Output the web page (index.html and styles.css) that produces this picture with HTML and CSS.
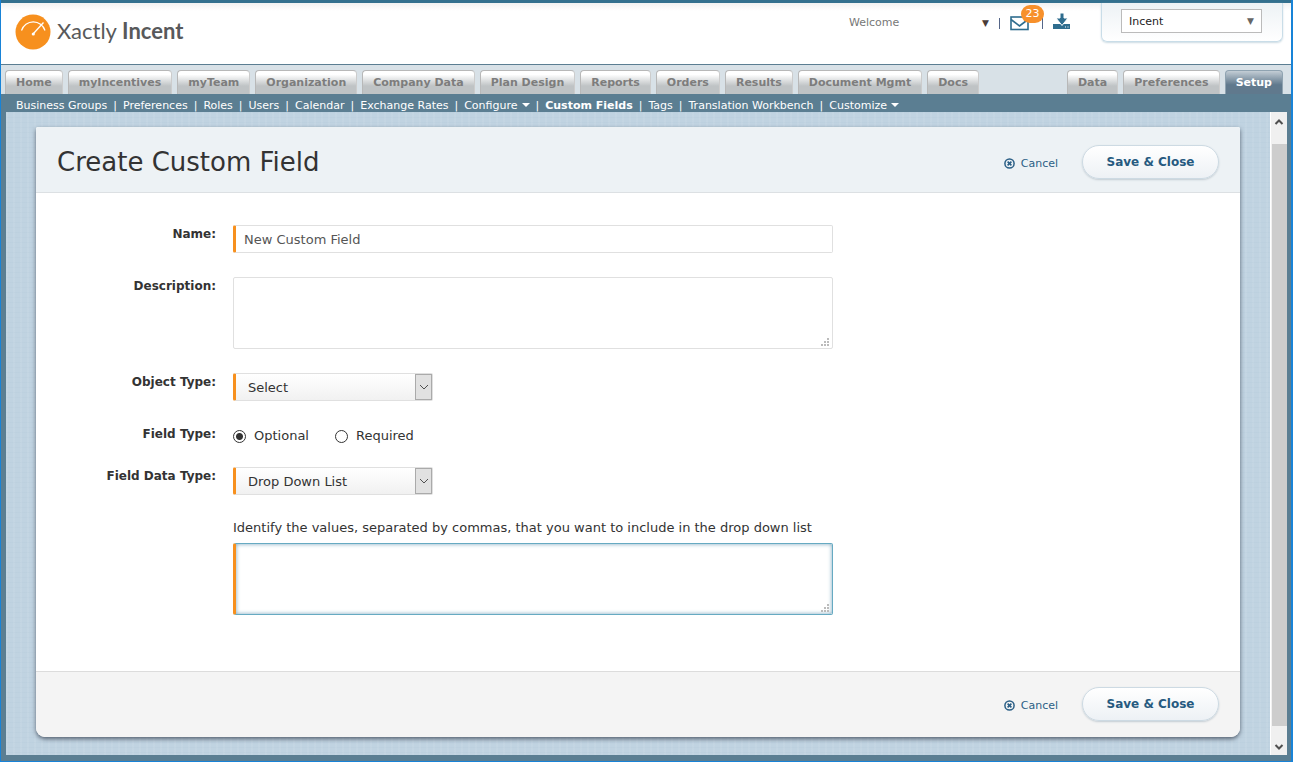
FILE: index.html
```
<!DOCTYPE html>
<html lang="en">
<head>
    <meta charset="UTF-8">
    <meta name="viewport" content="width=device-width, initial-scale=1.0">
    <title>Create Custom Field</title>
    <link rel="stylesheet" href="styles.css">
</head>
<body>
    <header class="header">
        <a class="logo" href="#">
            <svg width="36" height="36" viewBox="0 0 36 36">
                <circle cx="18" cy="18" r="17.5" fill="#f7901e"/>
                <path d="M6.5 16.5A12.3 12.3 0 0 1 30 16.5" fill="none" stroke="#fff" stroke-width="1.2"/>
                <path d="M18.5 19.5L28.5 8.500" stroke="#fff" stroke-width="1.3"/>
                <circle cx="18.3" cy="20" r="1.600" fill="#fff"/>
            </svg>
            <span>Xactly <b>Incent</b></span>
        </a>
        <div class="tools">
            <button class="welcome" type="button">Welcome <span class="caret">▼</span></button>
            <span class="bar"></span>
            <a class="mail" href="#" aria-label="Messages">
                <svg width="20" height="16" viewBox="0 0 20 16" fill="none" stroke="#2f6d8e" stroke-width="1.6">
                    <rect x="1" y="2" width="17" height="12.5"/>
                    <path d="M1 4.5l8.500 6.500 8.500-6.500"/>
                </svg>
                <span class="badge">23</span>
            </a>
            <span class="bar"></span>
            <a class="download" href="#" aria-label="Downloads">
                <svg width="18" height="17" viewBox="0 0 18 17" fill="#2f6d8e">
                    <path d="M0 11h17v5H0z"/>
                    <path d="M7 0h4v5h4l-6 7.500-6-7.500h4z" stroke="#fff" stroke-width="1"/>
                    <path d="M12 13.500h1v1h-1zM14.500 13.500h1v1h-1z" fill="#fff"/>
                </svg>
            </a>
            <div class="product">
                <select aria-label="Product">
                    <option>Incent</option>
                </select>
                <span class="caret">▼</span>
            </div>
        </div>
    </header>

    <nav class="tabs">
        <a href="#">Home</a>
        <a href="#">myIncentives</a>
        <a href="#">myTeam</a>
        <a href="#">Organization</a>
        <a href="#">Company Data</a>
        <a href="#">Plan Design</a>
        <a href="#">Reports</a>
        <a href="#">Orders</a>
        <a href="#">Results</a>
        <a href="#">Document Mgmt</a>
        <a href="#">Docs</a>
        <a class="first-right" href="#">Data</a>
        <a href="#">Preferences</a>
        <a class="active" href="#">Setup</a>
    </nav>

    <nav class="subnav">
        <a href="#">Business Groups</a>
        <a href="#">Preferences</a>
        <a href="#">Roles</a>
        <a href="#">Users</a>
        <a href="#">Calendar</a>
        <a href="#">Exchange Rates</a>
        <a class="menu" href="#">Configure</a>
        <a class="active" href="#">Custom Fields</a>
        <a href="#">Tags</a>
        <a href="#">Translation Workbench</a>
        <a class="menu" href="#">Customize</a>
    </nav>

    <div class="frame">
        <main class="content">
            <form class="panel">
                <div class="panel-header">
                    <h1>Create Custom Field</h1>
                    <a class="cancel" href="#">
                        <svg width="11" height="11" viewBox="0 0 11 11" fill="none" stroke="#2b5f86">
                            <circle cx="5.500" cy="5.500" r="4.600" stroke-width="1.500"/>
                            <path d="M3.600 3.600l3.800 3.800M7.400 3.600L3.600 7.400" stroke-width="1.600"/>
                        </svg>
                        Cancel
                    </a>
                    <button class="save" type="submit">Save &amp; Close</button>
                </div>

                <div class="fields">
                    <label class="label" for="name">Name:</label>
                    <input class="box required" type="text" id="name" value="New Custom Field">

                    <label class="label" for="description">Description:</label>
                    <div class="area">
                        <textarea class="box" id="description"></textarea>
                        <svg class="grip" width="9" height="9" viewBox="0 0 9 9"><path d="M6 0h2v2H6zM3 3h2v2H3zM6 3h2v2H6zM0 6h2v2H0zM3 6h2v2H3zM6 6h2v2H6z"/></svg>
                    </div>

                    <label class="label" for="object-type">Object Type:</label>
                    <div class="select">
                        <select class="box required" id="object-type">
                            <option>Select</option>
                        </select>
                        <span class="arrow"><svg width="10" height="6" viewBox="0 0 10 6"><path d="M1 1l4 4 4-4"/></svg></span>
                    </div>

                    <span class="label" id="field-type">Field Type:</span>
                    <div class="radios" role="radiogroup" aria-labelledby="field-type">
                        <label><input type="radio" name="fieldType" checked>Optional</label>
                        <label><input type="radio" name="fieldType">Required</label>
                    </div>

                    <label class="label" for="data-type">Field Data Type:</label>
                    <div class="select">
                        <select class="box required" id="data-type">
                            <option>Drop Down List</option>
                        </select>
                        <span class="arrow"><svg width="10" height="6" viewBox="0 0 10 6"><path d="M1 1l4 4 4-4"/></svg></span>
                    </div>

                    <div class="values">
                        <label for="values">Identify the values, separated by commas, that you want to include in the drop down list</label>
                        <div class="area">
                            <textarea class="box required focused" id="values"></textarea>
                            <svg class="grip" width="9" height="9" viewBox="0 0 9 9"><path d="M6 0h2v2H6zM3 3h2v2H3zM6 3h2v2H6zM0 6h2v2H0zM3 6h2v2H3zM6 6h2v2H6z"/></svg>
                        </div>
                    </div>
                </div>

                <div class="panel-footer">
                    <a class="cancel" href="#">
                        <svg width="11" height="11" viewBox="0 0 11 11" fill="none" stroke="#2b5f86">
                            <circle cx="5.500" cy="5.500" r="4.600" stroke-width="1.500"/>
                            <path d="M3.600 3.600l3.800 3.800M7.400 3.600L3.600 7.400" stroke-width="1.600"/>
                        </svg>
                        Cancel
                    </a>
                    <button class="save" type="submit">Save &amp; Close</button>
                </div>
            </form>
        </main>
        <div class="scrollbar">
            <svg width="10" height="8" viewBox="0 0 10 8"><path d="M1.500 6L5 2.500 8.500 6"/></svg>
            <div class="thumb"></div>
            <svg width="10" height="8" viewBox="0 0 10 8"><path d="M1.500 2L5 5.500 8.500 2"/></svg>
        </div>
    </div>
</body>
</html>
```
FILE: styles.css
```
* {
    box-sizing: border-box;
}

body {
    display: flex;
    flex-direction: column;
    min-height: 100vh;
    margin: 0;
    border: 1px solid #1883d7;
    border-top: none;
    border-right-width: 2px;
    background-color: #fff;
    color: #333;
    font-family: Verdana, "DejaVu Sans", sans-serif;
    font-size: 13px;
}

a {
    text-decoration: none;
}

input, textarea, select, button {
    font-family: inherit;
}

/* Header */
.header {
    display: flex;
    justify-content: space-between;
    height: 65px;
    border-top: 3px solid #33708e;
    border-bottom: 1px solid #5b7e92;
    background: linear-gradient(#f1f1f1, #fff 8px);
}

.logo {
    display: flex;
    gap: 6px;
    height: 36px;
    margin: 11px 0 0 14px;
    color: #58595b;
    font-family: Lato, sans-serif;
    font-size: 22px;
    line-height: 34px;
}

.tools {
    display: flex;
    align-items: flex-start;
    padding-right: 8px;
}

.welcome {
    display: flex;
    justify-content: space-between;
    width: 140px;
    margin-top: 12px;
    padding: 0;
    border: none;
    background: none;
    color: #777;
    font-size: 11px;
    line-height: 16px;
}

.caret {
    color: #4a3c38;
    font-size: 9px;
}

.bar {
    width: 1px;
    height: 11px;
    margin: 15px 10px 0;
    background-color: #568;
}

.mail {
    position: relative;
    height: 16px;
    margin-top: 12px;
}

.mail + .bar {
    margin-left: 12px;
}

.badge {
    position: absolute;
    top: -10px;
    left: 11px;
    width: 23px;
    border-radius: 9px;
    background-color: #f7902b;
    color: #fff;
    font-size: 11px;
    line-height: 18px;
    text-align: center;
}

.download {
    margin: 10px 30px 0 0;
}

.product {
    position: relative;
    width: 182px;
    height: 39px;
    padding: 6px 20px 6px 19px;
    border: 1px solid #c9dde8;
    border-top: none;
    border-radius: 0 0 6px 6px;
    background: linear-gradient(#edf2f5, #fff);
    box-shadow: 0 1px 2px #ccdbe3;
}

.product select {
    width: 100%;
    height: 24px;
    padding: 0 7px;
    border: 1px solid #bbb;
    border-radius: 0;
    background-color: #fff;
    color: #222;
    font-size: 11px;
    appearance: none;
}

.product .caret {
    position: absolute;
    top: 13px;
    right: 28px;
    color: #666;
    pointer-events: none;
}

/* Main navigation */
.tabs {
    display: flex;
    gap: 5px;
    padding: 5px 8px 0 4px;
    background-color: #d8e1e7;
}

.tabs a {
    height: 24px;
    padding: 0 10px;
    border: 1px solid #b8b8b8;
    border-right-color: #ccc;
    border-bottom: none;
    border-radius: 4px 4px 0 0;
    background: linear-gradient(#fff 15%, #bfc3c5 65%);
    color: #7d7d7d;
    font-size: 11px;
    font-weight: bold;
    line-height: 24px;
    white-space: nowrap;
}

.tabs .first-right {
    margin-left: auto;
}

.tabs .active {
    border-color: #8fa3b1;
    background: linear-gradient(#c3cdd5, #60798d 60%);
    color: #fff;
}

.subnav {
    display: flex;
    height: 18px;
    padding-left: 15px;
    background-color: #5b7e92;
    font-size: 11px;
    line-height: 24px;
    white-space: nowrap;
}

.subnav a {
    color: #fff;
}

.subnav a + a::before {
    content: "|";
    margin: 0 6px;
    font-weight: normal;
}

.subnav .active {
    font-weight: bold;
}

.subnav .menu::after {
    content: "";
    display: inline-block;
    margin: 0 0 2px 4px;
    border: 4px solid transparent;
    border-top-color: #fff;
    border-bottom: none;
}

/* Page area */
.frame {
    display: flex;
    flex: 1;
    border: solid #5b7e92;
    border-width: 0 4px 6px 5px;
}

.content {
    display: flex;
    flex: 1;
    padding: 15px 30px 18px;
    background-color: #c0d3e1;
    background-image:
        repeating-linear-gradient(90deg, rgba(255, 255, 255, 0.06) 0 2px, transparent 2px 7px),
        repeating-linear-gradient(rgba(90, 130, 160, 0.03) 0 1px, transparent 1px 5px);
}

.scrollbar {
    display: flex;
    flex-direction: column;
    justify-content: space-between;
    align-items: center;
    width: 17px;
    padding: 6px 0 4px;
    border-left: 1px solid #fff;
    background-color: #f0f0f0;
}

.scrollbar svg {
    fill: none;
    stroke: #505050;
    stroke-width: 2;
}

.thumb {
    flex: 1;
    width: 15px;
    margin: 18px 0 17px;
    background-color: #cdcdcd;
}

.panel {
    display: flex;
    flex: 1;
    flex-direction: column;
    border-radius: 2px 2px 9px 9px;
    background-color: #fff;
    box-shadow: 0 2px 4px rgba(40, 50, 65, 0.7);
}

.panel-header, .panel-footer {
    display: flex;
    justify-content: flex-end;
    align-items: center;
    height: 66px;
    padding: 4px 21px 0;
}

.panel-header {
    border-bottom: 1px solid #dce0e3;
    border-radius: 2px 2px 0 0;
    background-color: #edf2f5;
}

.panel-footer {
    margin-top: auto;
    padding: 0 21px 2px;
    border-top: 1px solid #dcdcdc;
    border-radius: 0 0 9px 9px;
    background-color: #f4f4f4;
}

h1 {
    margin: 0 auto 0 0;
    font-size: 26px;
    font-weight: normal;
    line-height: 32px;
}

.cancel {
    display: flex;
    align-items: center;
    gap: 6px;
    margin: 4px 24px 0 0;
    color: #2b5f86;
    font-size: 11px;
    line-height: 16px;
}

.save {
    width: 137px;
    height: 34px;
    border: 1px solid #cddae3;
    border-radius: 17px;
    background: linear-gradient(#fff, #edf1f5);
    box-shadow: 0 1px 2px #c3ccd3;
    color: #265a80;
    font-size: 12px;
    font-weight: bold;
    cursor: pointer;
}

/* Form */
.fields {
    display: grid;
    grid-template-columns: 180px minmax(0, 600px);
    gap: 24px 17px;
    padding: 32px 0;
}

.label {
    padding-top: 1px;
    font-size: 12px;
    font-weight: bold;
    line-height: 16px;
    text-align: right;
}

.box {
    display: block;
    width: 100%;
    height: 28px;
    padding: 0 10px;
    border: 1px solid #e0e0e0;
    border-radius: 2px;
    outline: none;
    background-color: #fff;
    color: #555;
    font-size: 13px;
}

.required {
    padding-left: 8px;
    border-left: 3px solid #f7901e;
}

.area {
    position: relative;
}

textarea.box {
    height: 72px;
    resize: none;
}

textarea.focused {
    border-color: #66aac2;
    border-left-color: #f7901e;
    box-shadow: inset 0 0 4px #7aa5bd;
}

.grip {
    position: absolute;
    right: 3px;
    bottom: 2px;
    fill: #bbb;
}

.select {
    position: relative;
    width: 200px;
}

.select .box {
    padding-left: 12px;
    background: linear-gradient(#fff, #f1f1f1);
    color: #333;
    appearance: none;
}

.arrow {
    position: absolute;
    top: 1px;
    right: 1px;
    display: flex;
    align-items: center;
    justify-content: center;
    width: 17px;
    height: 26px;
    border: 1px solid #aaa;
    background-color: #e1e1e1;
    pointer-events: none;
}

.arrow svg {
    fill: none;
    stroke: #505050;
}

.radios {
    display: flex;
    gap: 26px;
    line-height: 18px;
}

.radios label {
    display: flex;
    align-items: flex-end;
    height: 20px;
    gap: 8px;
    margin-bottom: -2px;
}

.radios input {
    width: 13px;
    height: 13px;
    margin: 0 0 2px;
    border: 1px solid #333;
    border-radius: 50%;
    background-color: #fff;
    appearance: none;
}

.radios input:checked {
    background: radial-gradient(circle, #333 3px, #fff 4px);
}

.values {
    grid-column: 2;
}

.values label {
    display: block;
    margin-bottom: 7px;
    padding-top: 1px;
    line-height: 16px;
    white-space: nowrap;
}
```
